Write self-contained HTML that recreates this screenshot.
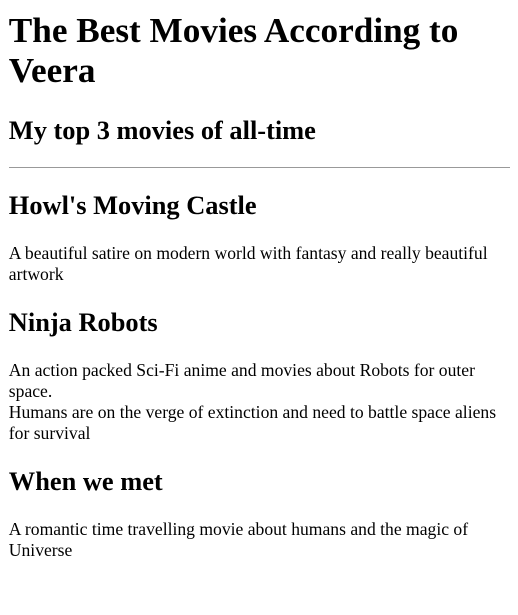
<!DOCTYPE html>
<html><head><meta charset="utf-8"><style>
html{zoom:1.1}
body{margin:8px 7px 8px 8px;padding-top:2px;font-family:"Liberation Serif",serif;color:#000;background:#fff}
h1{margin-top:0}
hr{border:none;border-top:1px solid #999;margin:0.5em 0}
</style></head><body>
<h1>The Best Movies According to Veera</h1>
<h2>My top 3 movies of all-time</h2>
<hr>
<h2>Howl's Moving Castle</h2>
<p>A beautiful satire on modern world with fantasy and really beautiful artwork</p>
<h2>Ninja Robots</h2>
<p>An action packed Sci-Fi anime and movies about Robots for outer space.<br>Humans are on the verge of extinction and need to battle space aliens for survival</p>
<h2>When we met</h2>
<p>A romantic time travelling movie about humans and the magic of Universe</p>
</body></html>
